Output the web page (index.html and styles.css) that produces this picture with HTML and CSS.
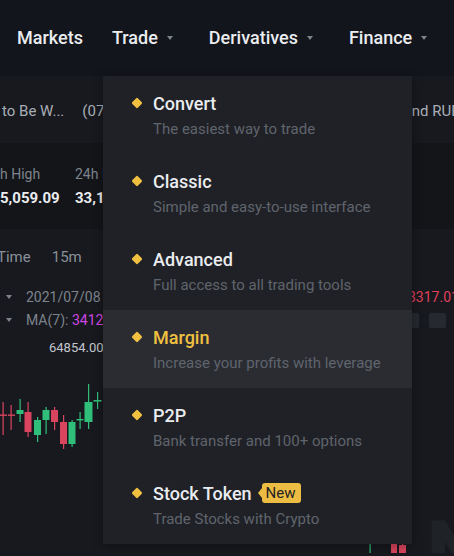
FILE: index.html
```html
<!DOCTYPE html>
<html lang="en">
<head>
<meta charset="utf-8">
<title>Trade menu</title>
<link rel="stylesheet" href="styles.css">
</head>
<body>
<header class="nav">
  <span class="nav-item nav-plain">Markets</span>
  <span class="nav-item">Trade<i class="caret"></i></span>
  <span class="nav-item">Derivatives<i class="caret"></i></span>
  <span class="nav-item">Finance<i class="caret"></i></span>
</header>

<main class="page">
  <div class="ticker">
    <span>to Be W...</span>
    <span class="ticker-date">(07-08)</span>
    <span class="ticker-right">and RUB</span>
  </div>

  <div class="stats">
    <div class="stat">
      <span class="stat-label">h High</span>
      <span class="stat-value">5,059.09</span>
    </div>
    <div class="stat">
      <span class="stat-label">24h Low</span>
      <span class="stat-value">33,125.00</span>
    </div>
  </div>

  <div class="intervals">
    <span class="interval-first">Time</span>
    <span>15m</span>
  </div>

  <div class="chart">
    <div class="legend-row">
      <i class="legend-caret"></i>
      <span class="legend-text">2021/07/08</span>
      <span class="legend-red">3317.01</span>
    </div>
    <div class="legend-row">
      <i class="legend-caret"></i>
      <span class="legend-text">MA(7): <b class="ma7">3412.5</b></span>
      <span class="tool tool-a"></span>
      <span class="tool tool-b"></span>
    </div>
    <div class="price-label">64854.00</div>
    <svg class="candles" width="454" height="196" viewBox="0 0 454 196">
      <text class="watermark" x="426" y="228">N</text>
      <g class="red">
        <rect x="2.5" y="45" width="1.2" height="33"/><rect x="0" y="57.5" width="7" height="1.4"/>
        <rect x="10.5" y="48" width="1.2" height="25"/><rect x="8" y="57.5" width="7" height="1.4"/>
        <rect x="27.5" y="45" width="1.2" height="35"/><rect x="24.5" y="55" width="7" height="20"/>
        <rect x="54" y="50" width="1.2" height="23"/><rect x="51" y="53" width="7" height="12"/>
        <rect x="63" y="58" width="1.2" height="34"/><rect x="60" y="65" width="7" height="22"/>
        <rect x="394" y="183" width="1.2" height="13"/><rect x="391" y="186" width="6" height="10"/>
        <rect x="402" y="184" width="1.2" height="12"/><rect x="399" y="188" width="7" height="8"/>
      </g>
      <g class="green">
        <rect x="19.5" y="42" width="1.2" height="23"/><rect x="16.5" y="53" width="7" height="4"/>
        <rect x="37" y="60" width="1.2" height="25"/><rect x="34" y="63" width="7" height="15"/>
        <rect x="45.5" y="50" width="1.2" height="27"/><rect x="42.5" y="53" width="7" height="10"/>
        <rect x="71.5" y="63" width="1.2" height="27"/><rect x="68.5" y="65" width="7" height="22"/>
        <rect x="79.5" y="55" width="1.2" height="17"/><rect x="76.5" y="62" width="7" height="1.4"/>
        <rect x="88" y="27" width="1.2" height="45"/><rect x="84.5" y="45" width="8" height="20"/>
        <rect x="97" y="35" width="1.2" height="17"/><rect x="93.5" y="43" width="8" height="1.6"/>
        <rect x="369.5" y="183" width="1.2" height="13"/>
      </g>
    </svg>
  </div>
</main>

<nav class="menu">
  <div class="menu-item">
    <span class="bullet"><i class="diamond"></i></span>
    <div class="menu-text">
      <div class="menu-title">Convert</div>
      <div class="menu-sub">The easiest way to trade</div>
    </div>
  </div>
  <div class="menu-item">
    <span class="bullet"><i class="diamond"></i></span>
    <div class="menu-text">
      <div class="menu-title">Classic</div>
      <div class="menu-sub">Simple and easy-to-use interface</div>
    </div>
  </div>
  <div class="menu-item">
    <span class="bullet"><i class="diamond"></i></span>
    <div class="menu-text">
      <div class="menu-title">Advanced</div>
      <div class="menu-sub">Full access to all trading tools</div>
    </div>
  </div>
  <div class="menu-item is-active">
    <span class="bullet"><i class="diamond"></i></span>
    <div class="menu-text">
      <div class="menu-title">Margin</div>
      <div class="menu-sub">Increase your profits with leverage</div>
    </div>
  </div>
  <div class="menu-item">
    <span class="bullet"><i class="diamond"></i></span>
    <div class="menu-text">
      <div class="menu-title">P2P</div>
      <div class="menu-sub">Bank transfer and 100+ options</div>
    </div>
  </div>
  <div class="menu-item">
    <span class="bullet"><i class="diamond"></i></span>
    <div class="menu-text">
      <div class="menu-title">Stock Token <span class="badge">New</span></div>
      <div class="menu-sub">Trade Stocks with Crypto</div>
    </div>
  </div>
</nav>
</body>
</html>
```

FILE: styles.css
```css
* { box-sizing: border-box; }

html, body {
  margin: 0;
  padding: 0;
  width: 454px;
  height: 556px;
  overflow: hidden;
  background: #17191e;
  font-family: Roboto, "Liberation Sans", sans-serif;
  color: #eaecef;
}

body { position: relative; }

/* ---------- top navigation ---------- */
.nav {
  height: 76px;
  background: #12151b;
  display: flex;
  align-items: center;
  padding-left: 17px;
  padding-bottom: 1px;
  white-space: nowrap;
}

.nav-item {
  display: flex;
  align-items: center;
  font-size: 18px;
  font-weight: 500;
  color: #eaecef;
  margin-right: 36px;
}

.nav-plain { margin-right: 29px; }

.caret {
  display: block;
  width: 0;
  height: 0;
  margin-left: 9px;
  margin-top: 1px;
  border-left: 3.5px solid transparent;
  border-right: 3.5px solid transparent;
  border-top: 4.5px solid #7d838c;
}

/* ---------- background page ---------- */
.page {
  height: 480px;
  display: flex;
  flex-direction: column;
  white-space: nowrap;
  overflow: hidden;
}

.ticker {
  height: 67px;
  display: flex;
  align-items: center;
  padding-left: 2px;
  padding-top: 2px;
  font-size: 15px;
  color: #a9aeb6;
}

.ticker-date { margin-left: 18px; }
.ticker-right { margin-left: 273px; }

.stats {
  height: 86px;
  background: #131519;
  display: flex;
  padding-top: 21px;
}

.stat {
  width: 75px;
  display: flex;
  flex-direction: column;
  overflow: hidden;
}

.stat-label {
  font-size: 14px;
  line-height: 20px;
  color: #7d838c;
}

.stat-value {
  margin-top: 4px;
  font-size: 15px;
  font-weight: 700;
  line-height: 20px;
  color: #eaecef;
}

.intervals {
  height: 47px;
  display: flex;
  align-items: center;
  gap: 21px;
  padding-top: 9px;
  font-size: 15px;
  color: #8a9099;
}

.interval-first { margin-left: -3px; }

.chart {
  flex: 1;
  padding-top: 11px;
}

.legend-row {
  height: 20px;
  display: flex;
  align-items: center;
  font-size: 14px;
  color: #7d838c;
  margin-bottom: 3px;
}

.legend-caret {
  display: block;
  flex: none;
  width: 0;
  height: 0;
  margin-left: 6px;
  border-left: 3.5px solid transparent;
  border-right: 3.5px solid transparent;
  border-top: 4.5px solid #7d838c;
}

.legend-text {
  flex: none;
  margin-left: 14px;
  width: 370px;
  overflow: hidden;
}

.ma7 {
  font-weight: 400;
  color: #d046e4;
}

.legend-red {
  flex: none;
  margin-left: 12px;
  color: #e0405a;
  font-size: 14px;
}

.tool {
  display: block;
  flex: none;
  height: 15px;
  background: #262a30;
  border-radius: 2px;
}

.tool-a { width: 8px; margin-left: 15px; }
.tool-b { width: 17px; margin-left: 10px; }

.price-label {
  margin-top: 9px;
  padding-left: 49px;
  height: 18px;
  line-height: 18px;
  font-size: 13px;
  color: #c3c7ce;
}

.candles {
  display: block;
  flex: none;
}

.candles .red rect { fill: #d9455e; }
.candles .green rect { fill: #2fbf7a; }

.watermark {
  font-family: Roboto, "Liberation Sans", sans-serif;
  font-size: 90px;
  font-weight: 700;
  fill: #1f2227;
}

/* ---------- dropdown menu ---------- */
.menu {
  position: absolute;
  top: 76px;
  left: 103px;
  width: 309px;
  background: #1f2126;
  box-shadow: 0 2px 10px rgba(0, 0, 0, 0.35);
}

.menu-item {
  height: 78px;
  display: flex;
  align-items: flex-start;
  padding: 16px 0 0 30px;
}

.menu-item.is-active { background: #2a2c32; }

.bullet {
  width: 20px;
  height: 22px;
  flex: none;
  display: flex;
  align-items: center;
}

.diamond {
  display: block;
  width: 8px;
  height: 8px;
  border-radius: 1.5px;
  background: #f0c040;
  transform: rotate(45deg);
}

.menu-text {
  display: flex;
  flex-direction: column;
  white-space: nowrap;
}

.menu-title {
  display: flex;
  align-items: center;
  height: 22px;
  font-size: 18px;
  font-weight: 500;
  color: #eaecef;
}

.is-active .menu-title { color: #f0c040; }

.menu-sub {
  margin-top: 4px;
  height: 22px;
  line-height: 22px;
  font-size: 15px;
  color: #5f646d;
}

.badge {
  position: relative;
  margin-left: 10px;
  height: 20px;
  line-height: 20px;
  padding: 0 5px 0 4px;
  font-size: 15px;
  font-weight: 400;
  color: #1f2126;
  background: #ecbd42;
  border-radius: 3px;
}

.badge::before {
  content: "";
  position: absolute;
  left: -4px;
  top: 5px;
  width: 0;
  height: 0;
  border-top: 5px solid transparent;
  border-bottom: 5px solid transparent;
  border-right: 4px solid #ecbd42;
}
```
